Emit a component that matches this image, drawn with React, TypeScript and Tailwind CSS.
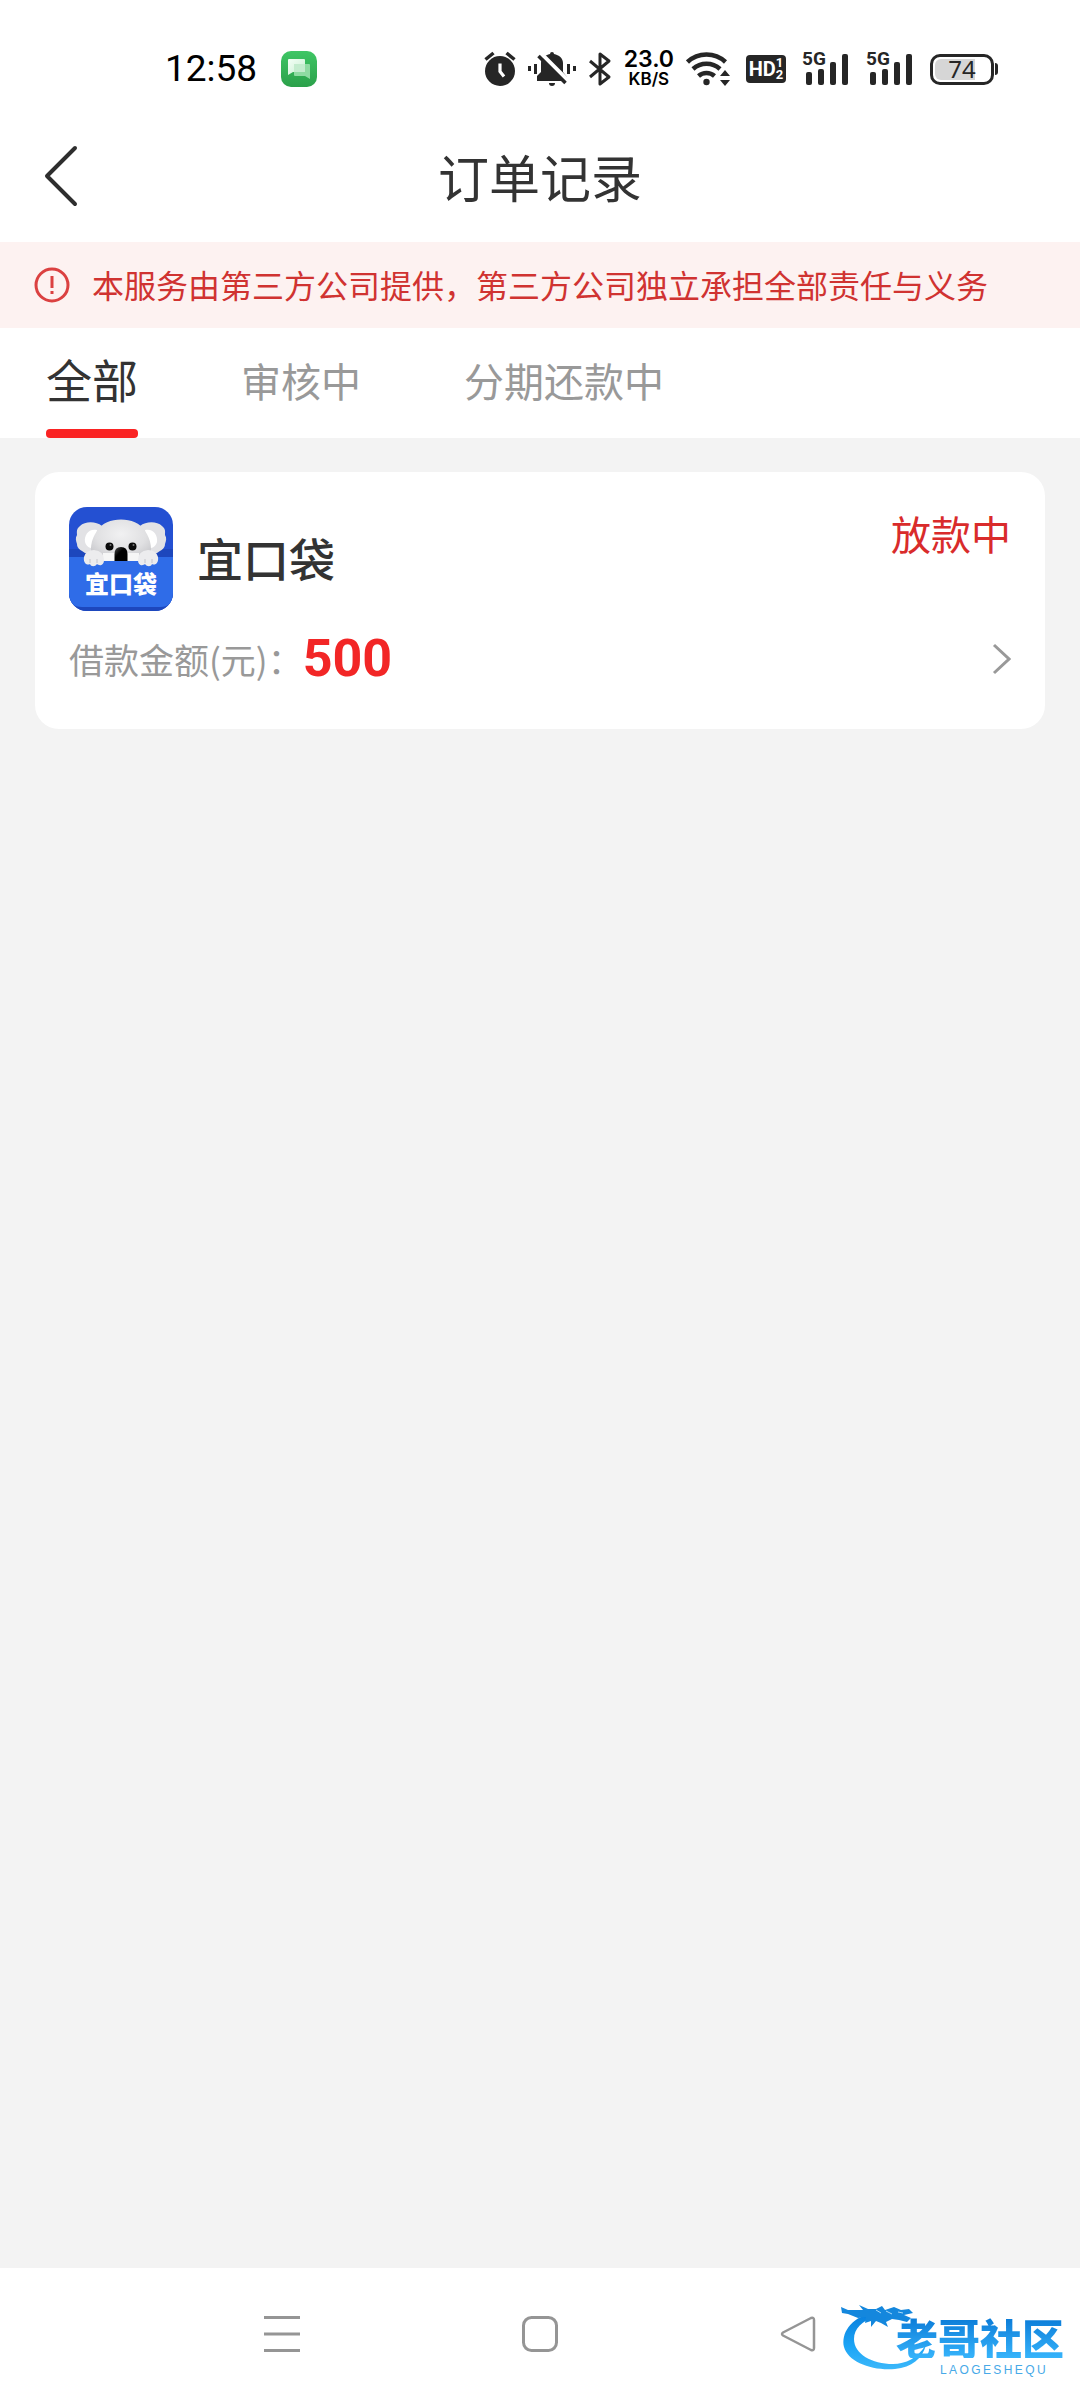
import React from 'react';

const cjk = "font-['Noto_Sans_CJK_SC',sans-serif]";

function ChatAppIcon() {
  return (
    <svg className="h-9 w-9" viewBox="0 0 36 36" aria-hidden="true">
      <defs>
        <linearGradient id="chatBg" x1="0" y1="0" x2="0" y2="1">
          <stop offset="0" stopColor="#3fc665" />
          <stop offset="1" stopColor="#2ba04a" />
        </linearGradient>
        <linearGradient id="chatFront" x1="0" y1="0" x2="1" y2="1">
          <stop offset="0" stopColor="#f4fff6" />
          <stop offset="1" stopColor="#c9efd2" />
        </linearGradient>
      </defs>
      <rect width="36" height="36" rx="10" fill="url(#chatBg)" />
      <path d="M13 13h15a1 1 0 0 1 1 1v14l-5-3H14a1 1 0 0 1-1-1z" fill="#8fdba2" />
      <path d="M8 8h15a1 1 0 0 1 1 1v11a1 1 0 0 1-1 1H12l-5 3V9a1 1 0 0 1 1-1z" fill="url(#chatFront)" />
      <path d="M13 13h11v7a1 1 0 0 1-1 1H13z" fill="#c4ecce" />
    </svg>
  );
}

function AlarmIcon() {
  return (
    <svg className="h-9 w-8" viewBox="0 0 32 36" aria-hidden="true">
      <circle cx="16" cy="20" r="15" fill="#262626" />
      <path d="M1.5 8.500 9.500 2M30.500 8.500 22.500 2" stroke="#262626" strokeWidth="3.500" fill="none" />
      <path d="M16 12.500v8l4 5" stroke="#fff" strokeWidth="3.200" fill="none" />
    </svg>
  );
}

function MutedBellIcon() {
  return (
    <svg className="h-9 w-12" viewBox="0 0 48 36" fill="#262626" aria-hidden="true">
      <rect x="0" y="15" width="3" height="5" />
      <rect x="6" y="13" width="3" height="10" />
      <rect x="39" y="13" width="3" height="10" />
      <rect x="45" y="15" width="3" height="5" />
      <path d="M22 3a2 2 0 0 1 4 0c5 1 9 4 9 9v9l4 5v4H9v-5l4-4v-9c0-5 4-8 9-9z" />
      <path d="M21 32h6a3 3 0 0 1-6 0z" />
      <path d="M13 2.500 41 30.500" stroke="#fff" strokeWidth="4" />
      <path d="M10.500 5 37.500 32" stroke="#262626" strokeWidth="3.500" />
    </svg>
  );
}

function BluetoothIcon() {
  return (
    <svg className="h-9 w-6" viewBox="0 0 24 36" fill="none" stroke="#262626" strokeWidth="3" aria-hidden="true">
      <path d="M2 10 21 26 12 33V3l9 7L2 26" strokeLinejoin="round" />
    </svg>
  );
}

function WifiIcon() {
  return (
    <svg className="h-9 w-11" viewBox="0 0 44 36" fill="none" stroke="#262626" strokeWidth="4.500" aria-hidden="true">
      <path d="M1.500 11a28 28 0 0 1 38 0" />
      <path d="M7 18a20 20 0 0 1 27 0" />
      <path d="M12.500 25a12 12 0 0 1 16 0" />
      <circle cx="20.500" cy="31" r="3.200" fill="#262626" stroke="none" />
      <path d="M34 25l5-6 5 6zM34 29h10l-5 6z" fill="#262626" stroke="none" />
    </svg>
  );
}

function Signal() {
  return (
    <div className="relative h-9 w-12">
      <svg className="h-9 w-12" viewBox="0 0 48 36" fill="#262626" aria-hidden="true">
        <rect x="4" y="21" width="6" height="13" rx="2" />
        <rect x="16" y="18" width="6" height="16" rx="2" />
        <rect x="28" y="11" width="6" height="23" rx="2" />
        <rect x="40" y="3" width="6" height="31" rx="2" />
      </svg>
      <span className="absolute top-0 left-0 font-[Roboto,sans-serif] text-[19px] leading-4 font-bold text-[#262626]">5G</span>
    </div>
  );
}

function StatusBar() {
  return (
    <div className="flex h-[116px] items-start justify-between pt-[49px] pr-[82px] pl-[165px] text-black">
      <div className="flex items-center gap-6">
        <span className="font-[Roboto,sans-serif] text-[37px] leading-10">12:58</span>
        <ChatAppIcon />
      </div>
      <div className="flex items-center gap-4">
        <div className="flex items-center gap-3">
          <AlarmIcon />
          <MutedBellIcon />
          <BluetoothIcon />
          <div className="flex flex-col items-center font-[Inter,sans-serif] font-semibold">
            <span className="text-[23px] leading-5">23.0</span>
            <span className="text-[17px] leading-5">KB/S</span>
          </div>
          <WifiIcon />
        </div>
        <div className="flex h-7 w-10 items-center justify-center rounded bg-[#262626] font-[Roboto,sans-serif] font-bold text-white">
          <span className="text-[20px] leading-6">HD</span>
          <span className="flex flex-col text-[13px] leading-3">
            <span>1</span>
            <span>2</span>
          </span>
        </div>
        <Signal />
        <Signal />
        <div className="flex items-center gap-px">
          <div className="relative flex h-[31px] w-16 items-center justify-center rounded-[10px] border-[3px] border-[#262626]">
            <div className="absolute inset-y-[2px] left-[2px] w-10 rounded-l-md bg-[#d6d6d6]" />
            <span className="relative font-['Noto_Sans',sans-serif] text-[24px] leading-6 text-[#262626]">74</span>
          </div>
          <div className="h-3 w-[3px] rounded-r bg-[#262626]" />
        </div>
      </div>
    </div>
  );
}

function KoalaIcon() {
  return (
    <div className="relative h-[104px] w-[104px] shrink-0 overflow-hidden rounded-[18px]">
      <svg className="h-full w-full" viewBox="0 0 104 104" aria-hidden="true">
        <defs>
          <radialGradient id="koalaHead" cx="0.5" cy="0.35" r="0.7">
            <stop offset="0" stopColor="#f1f1f2" />
            <stop offset="0.600" stopColor="#e0e0e2" />
            <stop offset="1" stopColor="#c4c4c8" />
          </radialGradient>
          <linearGradient id="nose" x1="0" y1="0" x2="1" y2="1">
            <stop offset="0" stopColor="#555" />
            <stop offset="0.400" stopColor="#000" />
          </linearGradient>
        </defs>
        <rect width="104" height="104" fill="#2450d2" />
        <rect y="42" width="104" height="62" fill="#1d47bd" />
        <path d="M0 50h104v38q0 12-13 12H13Q0 100 0 88z" fill="#2f6ce8" />
        <path d="M33 19c-6-5-17-5-22 0-4 3-3 6-3 9-2 3-1 6 0 9 0 5 4 6 8 9l14 5z" fill="#e2e2e5" />
        <path d="M71 19c6-5 17-5 22 0 4 3 3 6 3 9 2 3 1 6 0 9 0 5-4 6-8 9l-14 5z" fill="#e2e2e5" />
        <path d="M28 23c-8-2-13 5-12 12 1 4 5 7 9 6zM76 23c8-2 13 5 12 12-1 4-5 7-9 6z" fill="#fff" />
        <path d="M24 54C20 44 22 32 28 24 33 16 42 12.500 52 12.500S71 16 76 24c6 8 8 20 4 30z" fill="url(#koalaHead)" />
        <path d="M34 46h12v8H34zM58 46h12v8H58z" fill="#f6f6f6" />
        <circle cx="40.500" cy="39.500" r="4" fill="#0b0b0b" />
        <circle cx="63.500" cy="39.500" r="4" fill="#0b0b0b" />
        <circle cx="41.500" cy="38" r="1" fill="#777" />
        <circle cx="64.500" cy="38" r="1" fill="#777" />
        <path d="M45.500 54V47q0-7 6.500-7t6.500 7v7z" fill="url(#nose)" />
        <path d="M15 50q2-7 10-7 10 1 10 10c0 6-5 6-7 4-2 3-6 3-7 0-3 2-7-1-6-7z" fill="#ececee" />
        <path d="M89 50q-2-7-10-7-10 1-10 10c0 6 5 6 7 4 2 3 6 3 7 0 3 2 7-1 6-7z" fill="#ececee" />
        <path d="M21 52v4M28 52v4M76 52v4M83 52v4" stroke="#c4c4ca" strokeWidth="1" />
      </svg>
      <span className={`absolute inset-x-0 top-16 text-center text-[24px] leading-6 font-black text-white ${cjk}`}>宜口袋</span>
    </div>
  );
}

function Watermark() {
  return (
    <div className="absolute right-4 bottom-6 h-[76px] w-[224px]">
      <svg className="h-full w-full" viewBox="0 0 224 76" aria-hidden="true">
        <defs>
          <linearGradient id="dragon" x1="0" y1="0" x2="0" y2="1">
            <stop offset="0" stopColor="#087edc" />
            <stop offset="0.600" stopColor="#1ca5f6" />
            <stop offset="1" stopColor="#3cb8fa" />
          </linearGradient>
        </defs>
        <path d="M32 13C10 18 1 34 4 47c4 15 28 24 51 22 17-2 27-10 31-24-9 13-20 19-33 19-21 0-39-10-39-25 0-10 8-19 22-22z" fill="url(#dragon)" />
        <path d="M1 7l7 3 15 0-4-5 9 4 8 0 6-3 3 4 9-3 7 3 8-1 4 4-9 2 7 3-4 4-8-2-7-1-6 3 2 5-7-4-5-2-5 6 0-6-6 2 1-6-8 1-10-4-6-1z" fill="#1487dd" />
        <path d="M36 10l5 3M46 11l6 3M58 12l5 1" stroke="#a9daf8" strokeWidth="1" />
      </svg>
      <div className="absolute right-0 bottom-0 flex flex-col items-end gap-[6px]">
        <span className={`bg-linear-to-b from-[#0879d6] to-[#36b4fb] bg-clip-text text-[42px] leading-[42px] font-black text-transparent ${cjk}`}>老哥社区</span>
        <span className="mr-4 font-['Liberation_Sans',sans-serif] text-[12px] leading-3 tracking-[0.2em] text-[#47a9e8]">LAOGESHEQU</span>
      </div>
    </div>
  );
}

const tabs = ['全部', '审核中', '分期还款中'];

export default function App() {
  const [active, setActive] = React.useState(0);
  return (
    <div className={`flex min-h-screen flex-col bg-[#f3f3f3] text-[#333] ${cjk}`}>
      <header className="bg-white">
        <StatusBar />
        <div className="grid h-[126px] grid-cols-[1fr_auto_1fr] items-center pb-[6px]">
          <button type="button" aria-label="返回" className="ml-10 w-10">
            <svg className="h-16 w-10" viewBox="0 0 40 64" fill="none" stroke="#2e2e2e" strokeWidth="4" strokeLinecap="round" strokeLinejoin="round" aria-hidden="true">
              <path d="M35 4 7 32l28 28" />
            </svg>
          </button>
          <h1 className="text-[51px] leading-[60px]">订单记录</h1>
        </div>
      </header>

      <div className="flex h-[86px] items-center gap-[22px] bg-[#fdf2f1] pl-[34px] text-[#d03331]">
        <svg className="h-9 w-9 shrink-0" viewBox="0 0 36 36" fill="none" stroke="#db4141" strokeWidth="3" aria-hidden="true">
          <circle cx="18" cy="18" r="16" />
          <path d="M18 9v12M18 24v3" />
        </svg>
        <p className="pb-[2px] text-[32px] leading-10 whitespace-nowrap">本服务由第三方公司提供，第三方公司独立承担全部责任与义务</p>
      </div>

      <nav className="flex h-[110px] gap-[103px] bg-white pl-[46px]">
        {tabs.map((tab, i) => (
          <button
            key={tab}
            type="button"
            onClick={() => setActive(i)}
            className={
              i === active
                ? 'flex flex-col justify-between pt-5 text-[46px] leading-[60px]'
                : 'flex flex-col justify-between pt-5 text-[40px] leading-[64px] text-[#999]'
            }
          >
            {tab}
            {i === active && <span className="h-[9px] w-full rounded bg-[#fa2323]" />}
          </button>
        ))}
      </nav>

      <main className="flex-1 px-[35px] pt-[34px]">
        <article className="rounded-[24px] bg-white px-[34px] pt-[35px] pb-10">
          <div className="flex items-start">
            <KoalaIcon />
            <h2 className="mt-5 ml-6 text-[46px] leading-[60px] font-medium">宜口袋</h2>
            <span className="ml-auto text-[40px] leading-[52px] text-[#d92b2b]">放款中</span>
          </div>
          <div className="mt-[18px] flex h-[60px] items-center">
            <span className="text-[35px] leading-[60px] text-[#999]">借款金额(元)：</span>
            <strong className="font-[Roboto,sans-serif] text-[52px] leading-[60px] font-bold text-[#f22626]">500</strong>
            <button type="button" aria-label="查看详情" className="ml-auto">
              <svg className="h-9 w-6" viewBox="0 0 24 36" fill="none" stroke="#999" strokeWidth="3" aria-hidden="true">
                <path d="M7 4l15 14L7 32" />
              </svg>
            </button>
          </div>
        </article>
      </main>

      <footer className="relative flex h-[132px] items-center justify-center gap-[222px] bg-white">
        <button type="button" aria-label="最近任务">
          <svg className="h-9 w-9" viewBox="0 0 36 36" stroke="#959595" strokeWidth="3" aria-hidden="true">
            <path d="M0 1.500h36M0 18h36M0 34.500h36" />
          </svg>
        </button>
        <button type="button" aria-label="主屏幕">
          <svg className="h-9 w-9" viewBox="0 0 36 36" fill="none" stroke="#959595" strokeWidth="3" aria-hidden="true">
            <rect x="1.500" y="1.500" width="33" height="33" rx="8" />
          </svg>
        </button>
        <button type="button" aria-label="后退">
          <svg className="h-9 w-9" viewBox="0 0 36 36" fill="none" stroke="#959595" strokeWidth="2.500" strokeLinejoin="round" aria-hidden="true">
            <path d="M3 16.500 31 2q3-1 3 2v28q0 3-3 2L3 19.500q-2-1.500 0-3z" />
          </svg>
        </button>
        <Watermark />
      </footer>
    </div>
  );
}
